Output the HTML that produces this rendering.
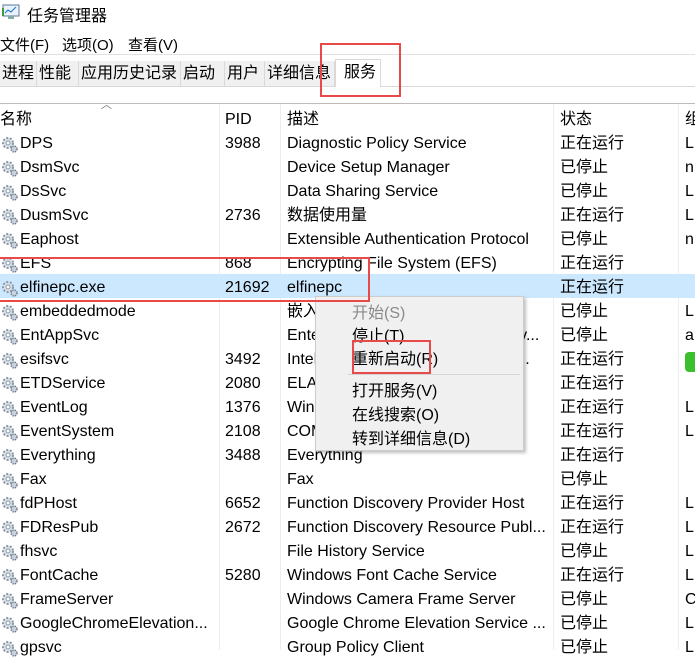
<!DOCTYPE html>
<html><head><meta charset="utf-8"><style>
*{margin:0;padding:0;box-sizing:border-box}
body{width:695px;height:650px;overflow:hidden;background:#fff;font-family:"Liberation Sans","Noto Sans CJK SC",sans-serif;font-size:15px;color:#000;position:relative}
.a{position:absolute;white-space:nowrap}
.row{position:absolute;left:0;width:695px;height:24px;line-height:24px;transform:translateY(2px);font-size:16px}
.row span{position:absolute;top:0;white-space:nowrap}
.c1{left:20px}.c2{left:225px}.c3{left:287px}.c4{left:560px}.c5{left:685px}
.ic{position:absolute;left:1px;top:4px;width:17px;height:17px}
.tab{position:absolute;top:61px;height:25px;line-height:25px;background:#f0f0f0;border-right:1px solid #d9d9d9;padding:0 2px;font-size:16px}
.vl{position:absolute;top:104px;width:1px;height:546px;background:#e8eef4}
.mi{position:absolute;left:352px;font-size:16px;line-height:20px;transform:translateY(2px)}
.red{position:absolute;border:2px solid #e84a4a}
</style></head><body>
<svg class="a" style="left:2px;top:4px" width="18" height="16" viewBox="0 0 18 16"><rect x="1" y="1" width="16" height="11" fill="#eaf3fb" stroke="#5b7a99"/><polyline points="3,9 6,6 9,8 14,3" fill="none" stroke="#2a7ad1" stroke-width="1.2"/><rect x="0" y="4" width="2" height="8" fill="#3c9a3c"/><rect x="6" y="12" width="6" height="3" fill="#8aa"/></svg>
<div class="a" style="left:27px;top:2px;font-size:16px">任务管理器</div>
<div class="a" style="left:0;top:34px">文件(F)</div>
<div class="a" style="left:62px;top:34px">选项(O)</div>
<div class="a" style="left:128px;top:34px">查看(V)</div>
<div class="a" style="left:0;top:54px;width:695px;height:1px;background:#e0e0e0"></div>
<div class="a" style="left:0;top:61px;width:335px;height:25px;background:#f0f0f0"></div>
<div class="tab" style="left:0">进程</div>
<div class="tab" style="left:37px;width:42px">性能</div>
<div class="tab" style="left:79px;width:102px">应用历史记录</div>
<div class="tab" style="left:181px;width:44px">启动</div>
<div class="tab" style="left:225px;width:40px">用户</div>
<div class="tab" style="left:265px;width:70px">详细信息</div>
<div class="a" style="left:335px;top:59px;width:46px;height:28px;background:#fff;border:1px solid #d9d9d9;border-bottom:none;line-height:25px;padding-left:8px;font-size:16px">服务</div>
<div class="a" style="left:381px;top:86px;width:314px;height:1px;background:#d9d9d9"></div>
<div class="a" style="left:0;top:86px;width:335px;height:1px;background:#d9d9d9"></div>
<div class="a" style="left:0;top:103px;width:695px;height:1px;background:#bcbcbc"></div>
<div class="a" style="left:101px;top:96px;font-size:11px;color:#777">︿</div>
<div class="vl" style="left:219px"></div><div class="vl" style="left:280px"></div><div class="vl" style="left:553px"></div><div class="vl" style="left:678px"></div>
<div class="row" style="top:106px"><span style="left:0">名称</span><span class="c2">PID</span><span class="c3">描述</span><span class="c4">状态</span><span class="c5">组</span></div>
<div class="a" style="left:0;top:274px;width:695px;height:24px;background:#cce8ff"></div>
<svg width="0" height="0" style="position:absolute"><defs><g id="g"><circle cx="7" cy="7" r="5" fill="#dde3ea" stroke="#8896a6" stroke-width="2" stroke-dasharray="2 1.6"/><circle cx="7" cy="7" r="2" fill="#fff" stroke="#8896a6"/><circle cx="13" cy="13" r="3" fill="#c8d2dd" stroke="#6a7a8c" stroke-width="1.4" stroke-dasharray="1.4 1"/></g></defs></svg>
<div class="row" style="top:130px"><svg class="ic"><use href="#g"/></svg><span class="c1">DPS</span><span class="c2">3988</span><span class="c3">Diagnostic Policy Service</span><span class="c4">正在运行</span><span class="c5">L</span></div>
<div class="row" style="top:154px"><svg class="ic"><use href="#g"/></svg><span class="c1">DsmSvc</span><span class="c3">Device Setup Manager</span><span class="c4">已停止</span><span class="c5">n</span></div>
<div class="row" style="top:178px"><svg class="ic"><use href="#g"/></svg><span class="c1">DsSvc</span><span class="c3">Data Sharing Service</span><span class="c4">已停止</span><span class="c5">L</span></div>
<div class="row" style="top:202px"><svg class="ic"><use href="#g"/></svg><span class="c1">DusmSvc</span><span class="c2">2736</span><span class="c3">数据使用量</span><span class="c4">正在运行</span><span class="c5">L</span></div>
<div class="row" style="top:226px"><svg class="ic"><use href="#g"/></svg><span class="c1">Eaphost</span><span class="c3">Extensible Authentication Protocol</span><span class="c4">已停止</span><span class="c5">n</span></div>
<div class="row" style="top:250px"><svg class="ic"><use href="#g"/></svg><span class="c1">EFS</span><span class="c2">868</span><span class="c3">Encrypting File System (EFS)</span><span class="c4">正在运行</span></div>
<div class="row" style="top:274px"><svg class="ic"><use href="#g"/></svg><span class="c1">elfinepc.exe</span><span class="c2">21692</span><span class="c3">elfinepc</span><span class="c4">正在运行</span></div>
<div class="row" style="top:298px"><svg class="ic"><use href="#g"/></svg><span class="c1">embeddedmode</span><span class="c3">嵌入</span><span class="c4">已停止</span><span class="c5">L</span></div>
<div class="row" style="top:322px"><svg class="ic"><use href="#g"/></svg><span class="c1">EntAppSvc</span><span class="c3">Enterprise App Management Serv...</span><span class="c4">已停止</span><span class="c5">a</span></div>
<div class="row" style="top:346px"><svg class="ic"><use href="#g"/></svg><span class="c1">esifsvc</span><span class="c2">3492</span><span class="c3">Intel(R) Dynamic Tuning Service...</span><span class="c4">正在运行</span><span class="c5" style="top:4px;width:14px;height:20px;background:#3bbf2c;border-radius:4px"></span></div>
<div class="row" style="top:370px"><svg class="ic"><use href="#g"/></svg><span class="c1">ETDService</span><span class="c2">2080</span><span class="c3">ELAN Service</span><span class="c4">正在运行</span></div>
<div class="row" style="top:394px"><svg class="ic"><use href="#g"/></svg><span class="c1">EventLog</span><span class="c2">1376</span><span class="c3">Windows Event Log</span><span class="c4">正在运行</span><span class="c5">L</span></div>
<div class="row" style="top:418px"><svg class="ic"><use href="#g"/></svg><span class="c1">EventSystem</span><span class="c2">2108</span><span class="c3">COM+ Event System</span><span class="c4">正在运行</span><span class="c5">L</span></div>
<div class="row" style="top:442px"><svg class="ic"><use href="#g"/></svg><span class="c1">Everything</span><span class="c2">3488</span><span class="c3">Everything</span><span class="c4">正在运行</span></div>
<div class="row" style="top:466px"><svg class="ic"><use href="#g"/></svg><span class="c1">Fax</span><span class="c3">Fax</span><span class="c4">已停止</span></div>
<div class="row" style="top:490px"><svg class="ic"><use href="#g"/></svg><span class="c1">fdPHost</span><span class="c2">6652</span><span class="c3">Function Discovery Provider Host</span><span class="c4">正在运行</span><span class="c5">L</span></div>
<div class="row" style="top:514px"><svg class="ic"><use href="#g"/></svg><span class="c1">FDResPub</span><span class="c2">2672</span><span class="c3">Function Discovery Resource Publ...</span><span class="c4">正在运行</span><span class="c5">L</span></div>
<div class="row" style="top:538px"><svg class="ic"><use href="#g"/></svg><span class="c1">fhsvc</span><span class="c3">File History Service</span><span class="c4">已停止</span><span class="c5">L</span></div>
<div class="row" style="top:562px"><svg class="ic"><use href="#g"/></svg><span class="c1">FontCache</span><span class="c2">5280</span><span class="c3">Windows Font Cache Service</span><span class="c4">正在运行</span><span class="c5">L</span></div>
<div class="row" style="top:586px"><svg class="ic"><use href="#g"/></svg><span class="c1">FrameServer</span><span class="c3">Windows Camera Frame Server</span><span class="c4">已停止</span><span class="c5">C</span></div>
<div class="row" style="top:610px"><svg class="ic"><use href="#g"/></svg><span class="c1">GoogleChromeElevation...</span><span class="c3">Google Chrome Elevation Service ...</span><span class="c4">已停止</span><span class="c5">L</span></div>
<div class="row" style="top:634px"><svg class="ic"><use href="#g"/></svg><span class="c1">gpsvc</span><span class="c3">Group Policy Client</span><span class="c4">已停止</span><span class="c5">L</span></div>
<div class="a" style="left:315px;top:296px;width:209px;height:155px;background:#f0f0f0;border:1px solid #ccc;box-shadow:2px 2px 3px rgba(0,0,0,.25)"></div>
<div class="mi" style="top:302px;color:#8a8a8a">开始(S)</div>
<div class="mi" style="top:325px">停止(T)</div>
<div class="mi" style="top:348px">重新启动(R)</div>
<div class="a" style="left:348px;top:374px;width:172px;height:1px;background:#d4d4d4"></div>
<div class="mi" style="top:380px">打开服务(V)</div>
<div class="mi" style="top:404px">在线搜索(O)</div>
<div class="mi" style="top:428px">转到详细信息(D)</div>
<div class="red" style="left:320px;top:43px;width:81px;height:54px"></div>
<div class="red" style="left:0;top:257px;width:370px;height:45px;border-left:none"></div>
<div class="red" style="left:352px;top:340px;width:79px;height:34px"></div>
</body></html>
